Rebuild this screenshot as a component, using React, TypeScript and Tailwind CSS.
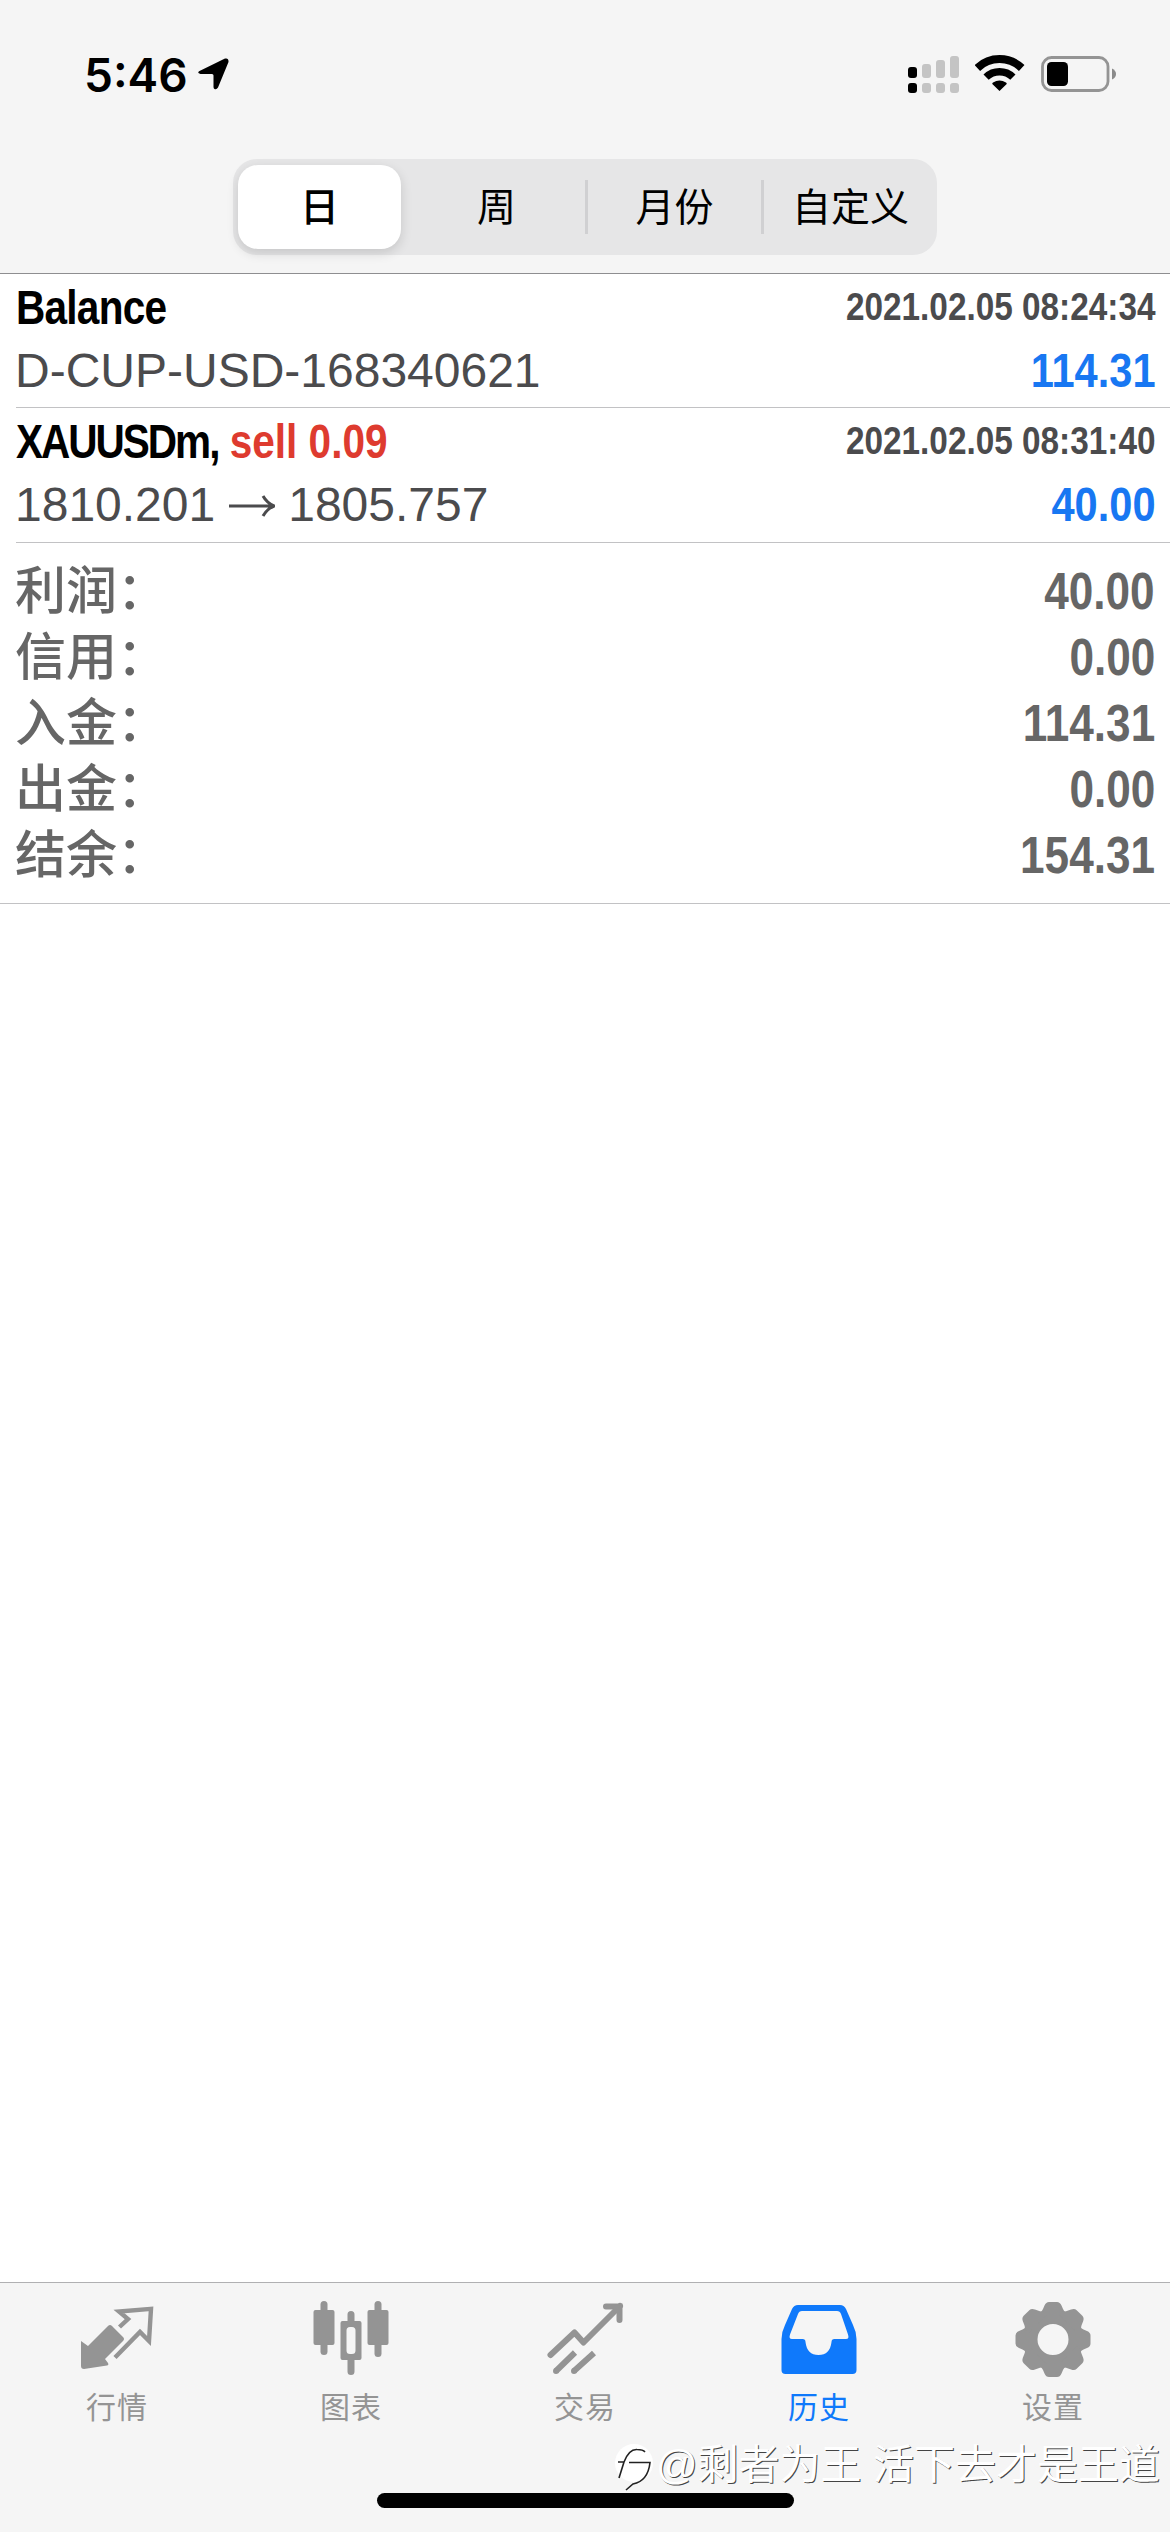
import type { ReactNode } from 'react';
import { clsx } from 'clsx';

interface Deal {
  id: number;
  title: string;
  action?: string;
  time: string;
  detail: ReactNode;
  profit: string;
}

const periods = ['日', '周', '月份', '自定义'];

const deals: Deal[] = [
  {
    id: 1,
    title: 'Balance',
    time: '2021.02.05 08:24:34',
    detail: 'D-CUP-USD-168340621',
    profit: '114.31',
  },
  {
    id: 2,
    title: 'XAUUSDm,',
    action: 'sell 0.09',
    time: '2021.02.05 08:31:40',
    detail: (
      <>
        1810.201
        <ArrowRight />
        1805.757
      </>
    ),
    profit: '40.00',
  },
];

const totals = [
  { label: '利润：', value: '40.00' },
  { label: '信用：', value: '0.00' },
  { label: '入金：', value: '114.31' },
  { label: '出金：', value: '0.00' },
  { label: '结余：', value: '154.31' },
];

const tabs = [
  { label: '行情', icon: <QuotesIcon /> },
  { label: '图表', icon: <ChartIcon /> },
  { label: '交易', icon: <TradeIcon /> },
  { label: '历史', icon: <HistoryIcon />, active: true },
  { label: '设置', icon: <SettingsIcon /> },
];

function ArrowRight() {
  return (
    <svg className="mr-[13px] ml-[14px] inline-block -translate-y-[2px]" width="46" height="22" viewBox="0 0 46 22" fill="none" stroke="currentColor" strokeWidth="3">
      <path d="M0 11H44M34 1Q38 8 45 11Q38 14 34 21" />
    </svg>
  );
}

function QuotesIcon() {
  return (
    <svg width="76" height="76" viewBox="0 0 76 76" fill="none">
      <path d="M2 36 9 41 29 21Q31 19 33 21L44 32Q46 34 44 36L26 54 29 58Q30 60 28 60.500L5 64Q2 64 2 61Z" fill="currentColor" />
      <path d="M40.500 22 49 14 40 6.500 72 3.800 70 36 61 27 36 52.500" stroke="currentColor" strokeWidth="4.400" />
    </svg>
  );
}

function ChartIcon() {
  return (
    <svg width="76" height="76" viewBox="0 0 76 76" fill="currentColor">
      <rect x="7.500" y="-4" width="7" height="54" rx="3.500" />
      <rect x="0.500" y="5" width="21" height="35" rx="2" />
      <rect x="61.500" y="-4" width="7" height="56" rx="3.500" />
      <rect x="54.500" y="5" width="21" height="35" rx="2" />
      <path d="M34.500 16V9.500a3.500 3.500 0 0 1 7 0V16H46.500q2 0 2 2V53q0 2-2 2H41.500V66.500a3.500 3.500 0 0 1-7 0V55H29.500q-2 0-2-2V18q0-2 2-2ZM37 22q-3.500 0-3.500 3.500V45.500q0 3.500 3.500 3.500h2q3.500 0 3.500-3.500V25.500q0-3.500-3.500-3.500Z" fillRule="evenodd" />
    </svg>
  );
}

function TradeIcon() {
  return (
    <svg width="76" height="76" viewBox="0 0 76 76" fill="none" stroke="currentColor" strokeWidth="6" strokeLinecap="round">
      <path d="M3.500 50 27.500 27.500 36.500 37.500 73 1" strokeLinejoin="round" />
      <path d="M59 1.500H72.500V15" />
      <path d="M9 66 28 47.500M27 66 47 48" strokeLinecap="butt" />
      <path d="M9 66h.01M27 66h.01" />
    </svg>
  );
}

function HistoryIcon() {
  return (
    <svg width="76" height="76" viewBox="0 0 76 76" fill="currentColor">
      <path d="M17 0H59Q63 0 65 4L72 20Q75.500 27 75.500 34V65Q75.500 69 71.500 69H4.500Q0.500 69 0.500 65V34Q0.500 27 4 20L11 4Q13 0 17 0ZM21 6Q18 6 17 9L9 29.500Q7.500 34 11 34H21.500Q24.500 34 24.500 37 26 50 37.500 50 49 50 50.500 37 50.500 34 53.500 34H65Q68.500 34 67 29.500L60 9Q59 6 56 6Z" fillRule="evenodd" />
    </svg>
  );
}

function SettingsIcon() {
  const tooth = 'M-4 -37.500H4Q7 -37.500 8.500 -34L10 -30.500Q11 -28 13 -27V-22H-13V-27Q-11 -28 -10 -30.500L-8.500 -34Q-7 -37.500 -4 -37.500Z';
  return (
    <svg width="76" height="76" viewBox="-38 -34.500 76 76" fill="currentColor">
      <circle r="22" fill="none" stroke="currentColor" strokeWidth="13" />
      {[0, 45, 90, 135, 180, 225, 270, 315].map((a) => (
        <path key={a} d={tooth} transform={`rotate(${a})`} />
      ))}
    </svg>
  );
}

function StatusBar() {
  return (
    <div className="flex h-[159px] items-start pt-[55px] pr-[53px] pl-[84px]">
      <span className="h-9 font-['Inter'] text-[46px] leading-[40px] font-semibold">5:46</span>
      <svg className="mt-[3px] ml-[10px]" width="31" height="32" viewBox="0 0 31 32">
        <path d="M1.500 13 27 .6Q30.800 -.3 30.500 4L20 29.500Q18.500 32 16.500 31 15.500 30.500 15.500 29V17.500Q15.500 16 14 16H2.500Q-1.500 15 1.500 13Z" />
      </svg>
      <div className="ml-auto flex items-start">
        <svg width="52" height="40" viewBox="0 0 52 40">
          <rect y="12" width="9" height="11" rx="3" />
          <rect y="28" width="9" height="10" rx="3" />
          <g fill="#c4c4c4">
            <rect x="14" y="9" width="9" height="14" rx="3" />
            <rect x="14" y="28" width="9" height="10" rx="3" />
            <rect x="28" y="5" width="9" height="18" rx="3" />
            <rect x="28" y="28" width="9" height="10" rx="3" />
            <rect x="42" y="1" width="9" height="22" rx="3" />
            <rect x="42" y="28" width="9" height="10" rx="3" />
          </g>
        </svg>
        <svg className="ml-[15px]" width="50" height="38" viewBox="0 0 50 38">
          <path d="M24.500 36 17.300 29Q17 28 18 27.500 24.500 23.500 31 27.500 32 28 31.700 29Z" />
          <path d="M2.300 13A32 32 0 0 1 46.700 13" fill="none" stroke="#000" strokeWidth="8" />
          <path d="M11.100 22.100A19.300 19.300 0 0 1 37.900 22.100" fill="none" stroke="#000" strokeWidth="7.500" />
        </svg>
        <svg className="ml-[16px]" width="76" height="38" viewBox="0 0 76 38">
          <rect x="1.500" y="2.500" width="65.500" height="33" rx="9" fill="none" stroke="#949494" strokeWidth="2.800" />
          <rect x="6" y="7" width="21" height="24" rx="4.500" />
          <path d="M71 13.500Q75 15.500 75 19T71 24.500Z" fill="#8a8a8a" />
        </svg>
      </div>
    </div>
  );
}

function PeriodPicker() {
  return (
    <div className="mx-auto grid h-24 w-[704px] grid-cols-4 rounded-[24px] bg-[#e6e6e7] text-[39px] leading-none">
      {periods.map((p, i) =>
        i === 0 ? (
          <div key={p} className="my-1.5 mr-[8px] ml-[5px] flex items-center justify-center rounded-[20px] bg-white font-medium shadow-[0_4px_12px_rgba(0,0,0,0.14)]">
            {p}
          </div>
        ) : (
          <div key={p} className="flex items-center">
            <span className={clsx('h-[54px] w-[3px]', i > 1 && 'bg-[#d0d0d2]')} />
            <span className={clsx('flex-1 text-center', i === 1 && 'pr-1')}>{p}</span>
          </div>
        ),
      )}
    </div>
  );
}

function DealRow({ deal }: { deal: Deal }) {
  return (
    <div className="ml-4 flex h-[135px] justify-between border-b border-[#c2c2c4] pt-[2px] pr-[15px] text-[48px] leading-[63px] whitespace-nowrap first:h-[134px]">
      <div>
        <div className="origin-left scale-x-[0.845] font-bold text-black">
          <span className={clsx(deal.action ? '-tracking-[2.4px]' : '-tracking-[0.9px]')}>{deal.title}</span>{' '}
          {deal.action && <span className="text-[#de3b2f]">{deal.action}</span>}
        </div>
        <div className="-ml-px text-[#4b4b4d]">{deal.detail}</div>
      </div>
      <div className="flex origin-right scale-x-[0.866] flex-col items-end font-bold">
        <div className="h-[63px] text-[38.5px] leading-[61px] text-[#4b4b4d]">{deal.time}</div>
        <div className="text-[#1877f2]">{deal.profit}</div>
      </div>
    </div>
  );
}

function Watermark() {
  return (
    <div className="absolute top-[2437px] right-[10px] flex items-center text-[41px] leading-[56px] font-normal whitespace-pre text-white [text-shadow:1px_1px_0_#444]">
      <svg className="mt-1 -mr-px" width="44" height="48" viewBox="0 0 44 48" fill="none">
        <circle cx="21" cy="20" r="19" fill="#fff" />
        <path d="M6 35 11 19H5M11 19Q16 6 24 6.500 30 6.500 32 9M16 19.500H37Q35 38 20 41L13 47" stroke="#222" strokeWidth="1.600" />
      </svg>
      @剩者为王 活下去才是王道
    </div>
  );
}

export default function App() {
  return (
    <div className="relative flex h-[2532px] w-[1170px] flex-col overflow-hidden bg-white font-['Liberation_Sans','Noto_Sans_CJK_SC',sans-serif] text-black">
      <header className="h-[274px] shrink-0 border-b border-[#8e8e90] bg-[#f5f5f5]">
        <StatusBar />
        <PeriodPicker />
      </header>

      <main className="flex-1">
        <div>
          {deals.map((d) => (
            <DealRow key={d.id} deal={d} />
          ))}
        </div>
        <div className="h-[361px] border-b border-[#c2c2c4] pt-[16px] pr-[15px] pl-[15px] text-[#666]">
          {totals.map((t) => (
            <div key={t.label} className="flex h-[66px] items-center justify-between leading-[66px]">
              <span className="text-[51px] font-medium">{t.label}</span>
              <span className="origin-right scale-x-[0.865] text-[51px] font-bold">{t.value}</span>
            </div>
          ))}
        </div>
      </main>

      <nav className="flex h-[250px] shrink-0 border-t border-[#b0b0b2] bg-[#f5f5f5]">
        {tabs.map((t) => (
          <div key={t.label} className={clsx('flex flex-1 flex-col items-center pt-[22px] [&>svg]:overflow-visible', t.active ? 'text-[#0f79fb]' : 'text-[#949494]')}>
            {t.icon}
            <span className="mt-[5px] text-[30px] leading-[44px] tracking-[1px]">{t.label}</span>
          </div>
        ))}
      </nav>

      <div className="absolute top-[2493px] left-[377px] h-[15px] w-[417px] rounded-full bg-black" />
      <Watermark />
    </div>
  );
}
